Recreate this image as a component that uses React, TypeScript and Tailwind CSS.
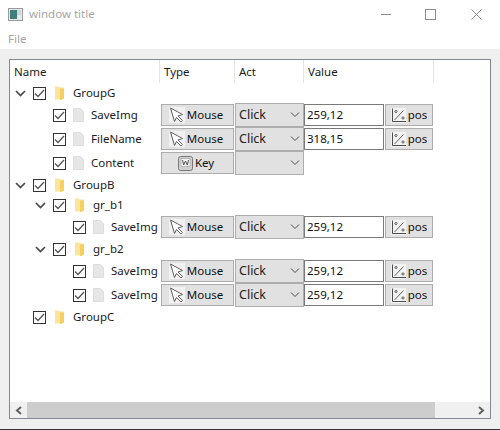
import React from 'react';

const Chevron = () => (
  <svg width="11" height="7" viewBox="0 0 11 7" fill="none" stroke="#4a4a4a" strokeWidth="1.7">
    <path d="M1 1l4.5 4.5L10 1" />
  </svg>
);

const Check = () => (
  <span className="w-[13px] h-[13px] border border-[#333333] bg-white flex items-center justify-center shrink-0">
    <svg width="11" height="9" viewBox="0 0 11 9" fill="none" stroke="#555555" strokeWidth="1.3">
      <path d="M1 4.5l3 3L10 1" />
    </svg>
  </span>
);

const Folder = () => (
  <svg width="9" height="14" viewBox="0 0 9 14" className="shrink-0 block">
    <path d="M0 0.5h4l1 1h4v11l-3 1H0z" fill="#fbe49c" />
    <path d="M5 2.5h4v10l-3 1.5H5z" fill="#f6cf5e" />
  </svg>
);

const FileIcon = () => (
  <svg width="11" height="14" viewBox="0 0 11 14" className="shrink-0 block">
    <path d="M0.5 0.5h7l3 3v10h-10z" fill="#e6e6e6" stroke="#dddddd" />
  </svg>
);

const PointerIcon = () => (
  <svg width="16" height="16" viewBox="0 0 16 16" className="shrink-0 bg-[#f1f1f1]">
    <path d="M1.5 1l12 6.5-4.5 1.5 4.5 4.5-1.5 1.5-4.5-4.5L5.5 14.5z" fill="#ffffff" stroke="#5f5f5f" />
  </svg>
);

const KeyIcon = () => (
  <svg width="15" height="15" viewBox="0 0 15 15" className="shrink-0">
    <rect x="0.5" y="0.5" width="14" height="14" rx="2" fill="#d0d0d0" stroke="#777777" />
    <rect x="3" y="2.5" width="9" height="8" fill="#f5f5f5" stroke="#999999" strokeWidth="0.6" />
    <path d="M4.5 4l1.2 5 1.8-4 1.8 4L10.5 4" fill="none" stroke="#444444" strokeWidth="0.9" />
  </svg>
);

const PosIcon = () => (
  <svg width="15" height="15" viewBox="0 0 15 15" className="shrink-0 bg-[#f3f3f3]" fill="none" stroke="#4d4d4d">
    <path d="M1.5 0.5v13H15" />
    <path d="M3.5 12L12.5 2.5" strokeWidth="0.9" />
    <circle cx="5" cy="3.5" r="1.1" strokeWidth="0.9" />
    <circle cx="12" cy="10" r="1.1" strokeWidth="0.9" />
  </svg>
);

const TypeButton = ({ kind }: { kind: 'mouse' | 'key' }) => (
  <div className="w-[73px] h-[22px] border border-[#adadad] bg-[#e1e1e1] flex items-center justify-center gap-[2px] pr-[3px] text-[#111111] mr-[1px] shrink-0">
    {kind === 'mouse' ? <PointerIcon /> : <KeyIcon />}
    {kind === 'mouse' ? 'Mouse' : 'Key'}
  </div>
);

const Combo = ({ value }: { value: string }) => (
  <div className="w-[69px] h-[24px] border border-[#adadad] bg-[#e1e1e1] flex items-center justify-between pl-[3px] pr-[3px] text-[12.5px] text-[#222222] shrink-0">
    <span>{value}</span>
    <svg width="10" height="6" viewBox="0 0 10 6" fill="none" stroke="#4a4a4a">
      <path d="M1 0.5l4 4 4-4" />
    </svg>
  </div>
);

const PosField = ({ value }: { value: string }) => (
  <>
    <div className="w-[80px] h-[22px] border border-[#7a7a7a] bg-white flex items-center pl-[2px] text-[#111111] shrink-0">
      {value}
    </div>
    <div className="ml-[1px] w-[48px] h-[22px] border border-[#adadad] bg-[#e1e1e1] flex items-center justify-center gap-[2px] text-[#111111] shrink-0">
      <PosIcon />
      pos
    </div>
  </>
);

const GroupRow = ({ name, pad, open = true }: { name: string; pad: string; open?: boolean }) => (
  <div className={`flex items-center h-[20px] ${pad}`}>
    <span className="w-[15px] flex justify-center shrink-0">{open && <Chevron />}</span>
    <span className="ml-[5px]">
      <Check />
    </span>
    <span className="ml-[9px]">
      <Folder />
    </span>
    <span className="ml-[9px] text-[#1a1a1a]">{name}</span>
  </div>
);

type Item = { name: string; kind: 'mouse' | 'key'; act: string; value?: string };

const ItemRow = ({ item, pad }: { item: Item; pad: string }) => (
  <div className="flex items-center h-[24px]">
    <div className={`w-[150px] flex items-center shrink-0 ${pad}`}>
      <Check />
      <span className="ml-[7px]">
        <FileIcon />
      </span>
      <span className="ml-[7px] text-[#1a1a1a]">{item.name}</span>
    </div>
    <div className="ml-[1px] flex items-center">
      <TypeButton kind={item.kind} />
      <Combo value={item.act} />
      {item.value && <PosField value={item.value} />}
    </div>
  </div>
);

const HeaderCell = ({ label, width }: { label: string; width: string }) => (
  <div className={`${width} h-full border-r border-[#e5e5e5] pl-[4px] flex items-center text-[#1a1a1a] shrink-0`}>
    {label}
  </div>
);

export default function App() {
  return (
    <div className="w-[500px] h-[430px] bg-white flex flex-col overflow-hidden text-[11.5px] font-['Noto_Sans','Open_Sans',sans-serif]">
      <div className="h-[28px] flex items-center shrink-0">
        <svg width="15" height="13" viewBox="0 0 15 13" className="ml-[8px]">
          <rect x="0.5" y="0.5" width="14" height="12" fill="#e8e8e8" stroke="#9a9a9a" />
          <rect x="2" y="2" width="7" height="9" fill="#3f7f7a" />
          <rect x="9" y="2" width="4" height="5" fill="#cfd8dc" />
        </svg>
        <span className="ml-[6px] text-[#a6a6a6]">window title</span>
        <div className="ml-auto flex items-center">
          <span className="w-[10px] h-[1px] bg-[#8c8c8c] mr-[34px]" />
          <span className="w-[11px] h-[11px] border border-[#8c8c8c] mr-[35px]" />
          <svg width="11" height="11" viewBox="0 0 11 11" stroke="#8c8c8c" className="mr-[18px]">
            <path d="M0.5 0.5l10 10M10.5 0.5l-10 10" />
          </svg>
        </div>
      </div>
      <div className="h-[21px] flex items-center pl-[8px] pt-[1px] text-[#a6a6a6] shrink-0">File</div>
      <div className="flex-1 bg-[#efefef] px-[9px] pt-[10px] pb-[10px] flex min-h-0">
        <div className="flex-1 border border-[#828790] bg-white flex flex-col min-h-0">
          <div className="h-[23px] flex shrink-0">
            <HeaderCell label="Name" width="w-[150px]" />
            <HeaderCell label="Type" width="w-[75px]" />
            <HeaderCell label="Act" width="w-[69px]" />
            <HeaderCell label="Value" width="w-[130px]" />
          </div>
          <div className="flex-1 min-h-0">
            <GroupRow name="GroupG" pad="pl-[3px]" />
            <ItemRow pad="pl-[43px]" item={{ name: 'SaveImg', kind: 'mouse', act: 'Click', value: '259,12' }} />
            <ItemRow pad="pl-[43px]" item={{ name: 'FileName', kind: 'mouse', act: 'Click', value: '318,15' }} />
            <ItemRow pad="pl-[43px]" item={{ name: 'Content', kind: 'key', act: '' }} />
            <GroupRow name="GroupB" pad="pl-[3px]" />
            <GroupRow name="gr_b1" pad="pl-[23px]" />
            <ItemRow pad="pl-[63px]" item={{ name: 'SaveImg', kind: 'mouse', act: 'Click', value: '259,12' }} />
            <GroupRow name="gr_b2" pad="pl-[23px]" />
            <ItemRow pad="pl-[63px]" item={{ name: 'SaveImg', kind: 'mouse', act: 'Click', value: '259,12' }} />
            <ItemRow pad="pl-[63px]" item={{ name: 'SaveImg', kind: 'mouse', act: 'Click', value: '259,12' }} />
            <GroupRow name="GroupC" pad="pl-[3px]" open={false} />
          </div>
          <div className="h-[16px] bg-[#f0f0f0] flex shrink-0">
            <div className="w-[17px] flex items-center justify-center">
              <svg width="7" height="9" viewBox="0 0 7 9" fill="none" stroke="#606060" strokeWidth="2">
                <path d="M6 1L2 4.5 6 8" />
              </svg>
            </div>
            <div className="w-[408px] bg-[#cdcdcd]" />
            <div className="flex-1 flex items-center justify-end pr-[5px]">
              <svg width="7" height="9" viewBox="0 0 7 9" fill="none" stroke="#606060" strokeWidth="2">
                <path d="M1 1l4 3.5L1 8" />
              </svg>
            </div>
          </div>
        </div>
      </div>
      <div className="h-[1px] bg-[#333333] shrink-0" />
    </div>
  );
}
